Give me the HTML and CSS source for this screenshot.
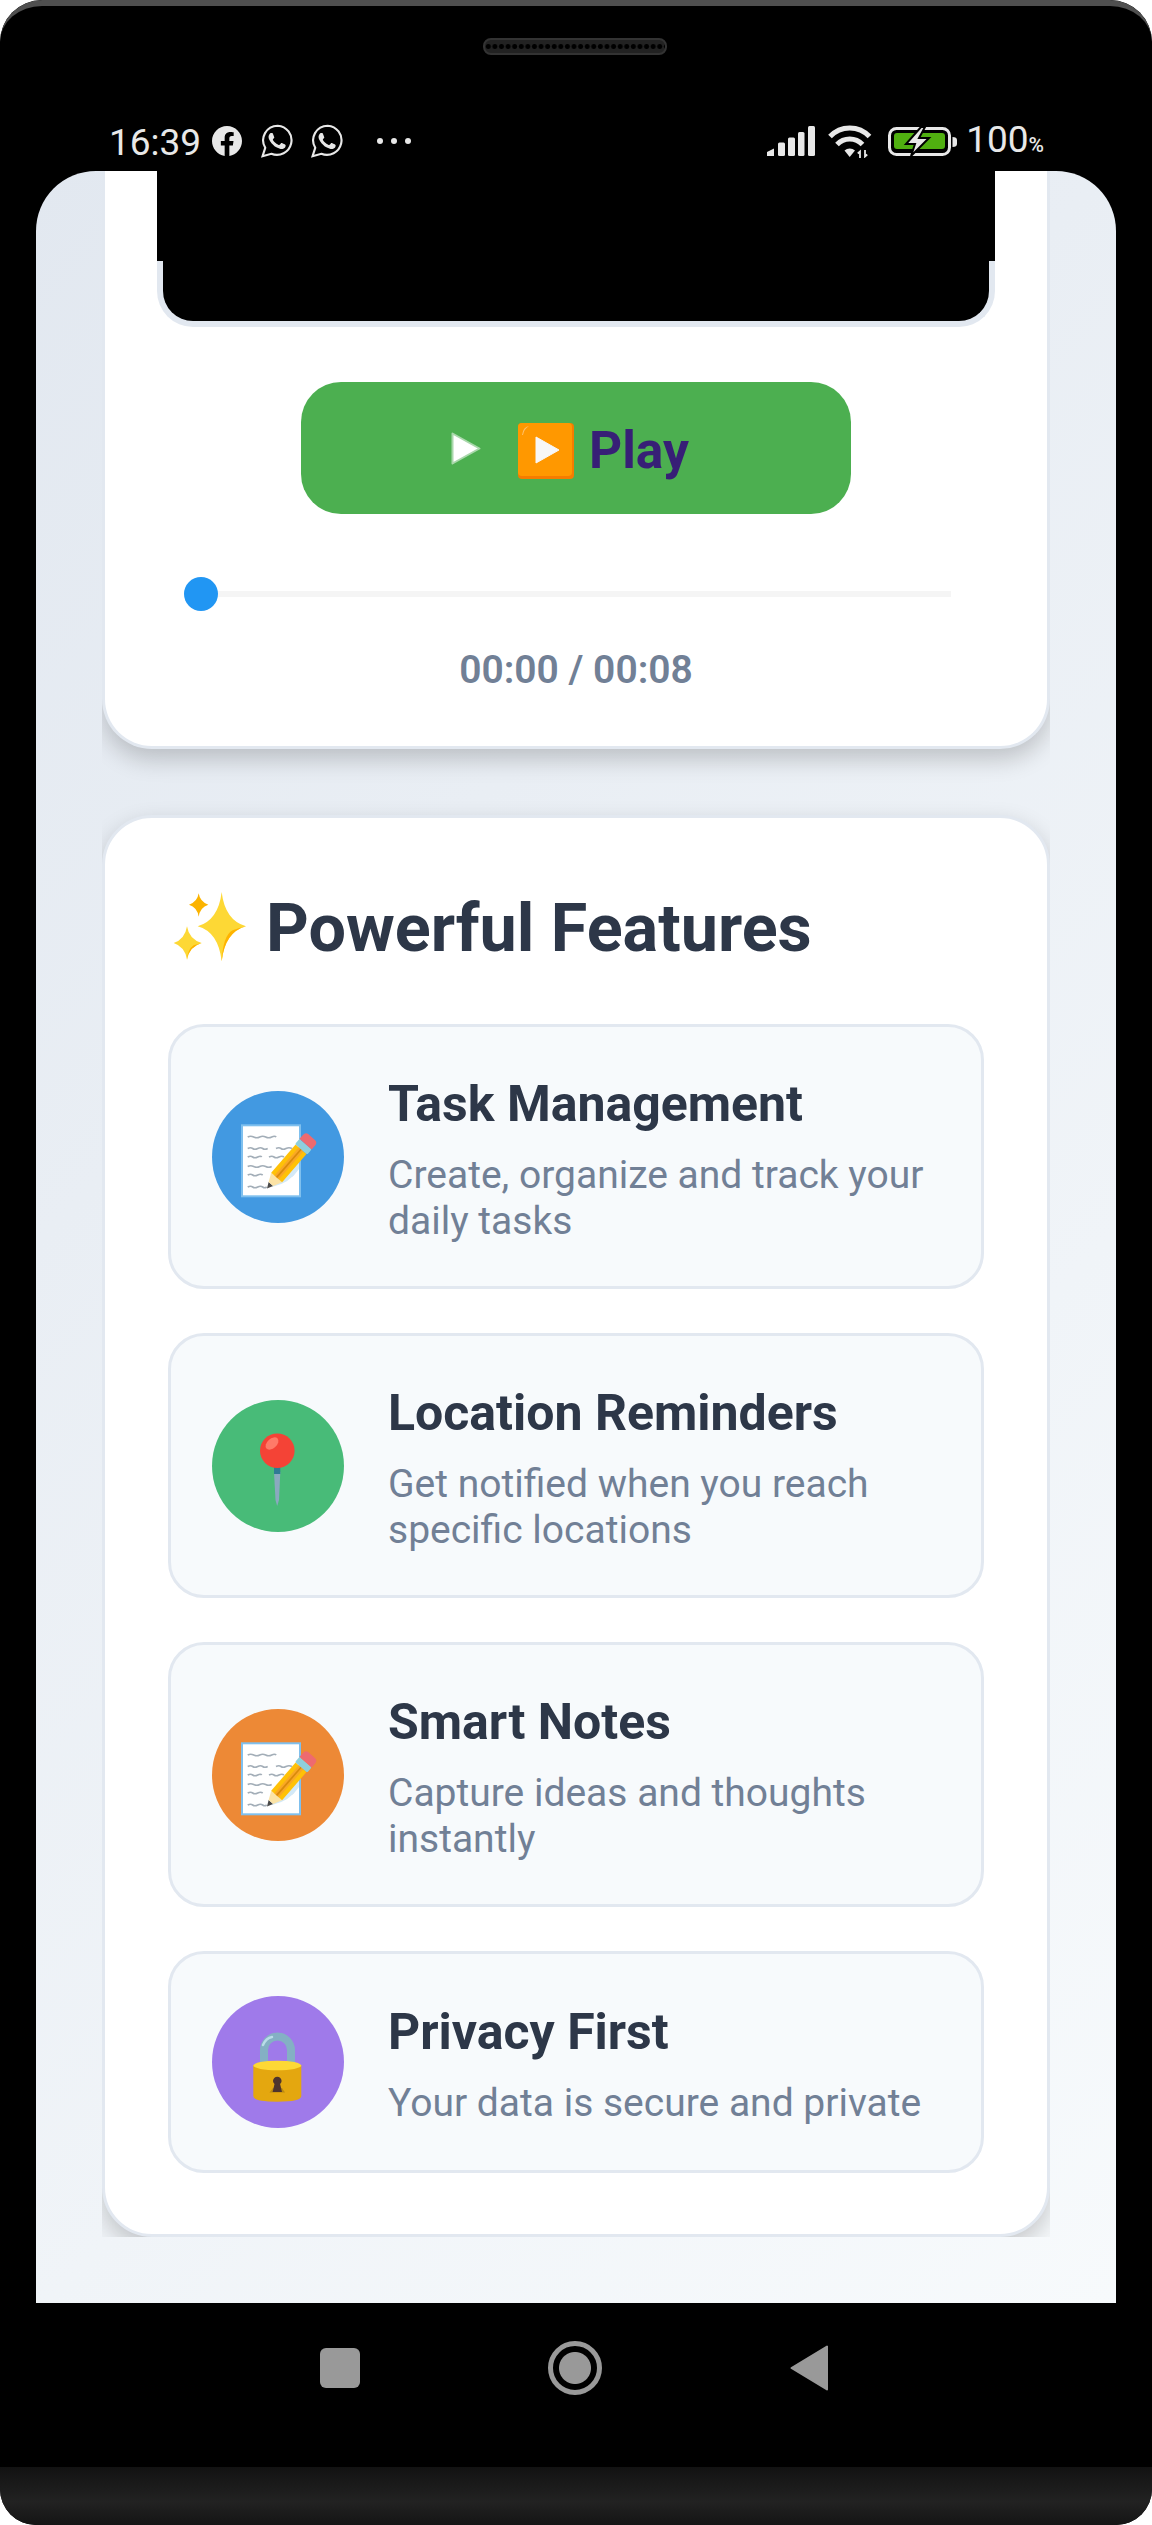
FILE: index.html
```html
<!DOCTYPE html>
<html lang="en">
<head>
  <meta charset="UTF-8" />
  <title>Powerful Features</title>
  <link rel="stylesheet" href="styles.css">
</head>
<body>
  <svg class="defs" width="0" height="0">
    <symbol id="memo" viewBox="0 0 132 132">
      <rect x="30" y="34.3" width="58" height="71" fill="#fff" stroke="#7fc0ee" stroke-width="2"/>
      <g fill="none" stroke="#a3aeb8" stroke-width="1.7">
        <path d="M35.7 46q3-1.500 6 0t6 0 6 0 6 0 4.500 0"/>
        <path d="M35.700 57.500q3-1.500 5 0t5 0 5 0 5 0M64 57.500q3-1.500 5 0t5 0 6 0"/>
        <path d="M35.700 66q3-1.500 5 0t5 0 4 0M57 66q3-1.500 5 0t5 0 5 0"/>
        <path d="M35.700 75.500q3-1.500 6 0t6 0 6 0 6 0"/>
        <path d="M35.700 84q3-1.500 5 0t5 0 5 0M73 84q3-1.500 4 0t4 0"/>
        <path d="M35.700 96q3-1.500 5 0t5 0 5 0 4 0"/>
      </g>
      <path d="M60 96Q78 92 87 78L87 70 64 88Z" fill="#d3e9f7"/>
      <g transform="translate(55 97.500) rotate(-49) scale(.98 .85)">
        <path d="M0 0L6-3.500V3.500Z" fill="#4a4a4a"/>
        <path d="M6-3.500L15-8.500V8.500L6 3.500Z" fill="#fbe3a6"/>
        <rect x="15" y="-8.500" width="38" height="17" fill="#ffc107"/>
        <rect x="15" y="-3.500" width="38" height="7" fill="#f9a825"/>
        <rect x="15" y="-1" width="38" height="2" fill="#d98a0b"/>
        <rect x="53" y="-9.500" width="7" height="19" rx="1.500" fill="#8fcfdc"/>
        <path d="M60-9.500H65Q69.500-9.500 69.500-5V5Q69.500 9.500 65 9.500H60Z" fill="#ee6a6f"/>
      </g>
    </symbol>
  </svg>

  <div class="phone">
    <div class="top-bezel">
      <div class="speaker"></div>
      <div class="status-bar">
        <div class="status-left">
          <span class="clock">16:39</span>
          <svg class="fb-icon" viewBox="0 0 24 24"><path fill="#e8e8e8" d="M24 12.070C24 5.400 18.630 0 12 0S0 5.400 0 12.070c0 6.030 4.390 11.020 10.130 11.930v-8.440H7.080v-3.490h3.050V9.410c0-3.020 1.790-4.690 4.530-4.690 1.310 0 2.680.240 2.680.240v2.970h-1.510c-1.490 0-1.950.930-1.950 1.880v2.260h3.330l-.530 3.490h-2.800V24C19.610 23.090 24 18.100 24 12.070z"/></svg>
          <svg class="wa-icon" viewBox="0 0 24 24"><path fill="none" stroke="#e8e8e8" stroke-width="1.500" d="M12.500 1.200A10.300 10.300 0 0 0 3.700 16.800L1.800 22.800l6.200-1.800A10.300 10.300 0 1 0 12.500 1.200z"/><path fill="#e8e8e8" d="M17.470 14.380c-.3-.15-1.760-.87-2.030-.97-.27-.1-.47-.15-.67.150-.2.3-.77.970-.94 1.170-.17.2-.35.220-.64.070-.3-.15-1.260-.46-2.390-1.480-.88-.79-1.480-1.760-1.650-2.060-.17-.3-.02-.46.130-.6.130-.13.3-.35.450-.52.150-.17.2-.3.3-.5.1-.2.050-.37-.02-.52-.08-.15-.67-1.610-.91-2.200-.24-.58-.49-.5-.67-.51h-.57c-.2 0-.52.070-.79.370-.27.3-1.040 1.020-1.040 2.480s1.070 2.880 1.210 3.070c.15.2 2.100 3.200 5.080 4.490.71.3 1.260.49 1.690.62.71.230 1.360.2 1.870.120.570-.08 1.760-.72 2.010-1.410.25-.7.250-1.290.170-1.410-.07-.13-.27-.2-.57-.35z"/></svg>
          <svg class="wa-icon" viewBox="0 0 24 24"><path fill="none" stroke="#e8e8e8" stroke-width="1.500" d="M12.500 1.200A10.300 10.300 0 0 0 3.700 16.800L1.800 22.800l6.200-1.800A10.300 10.300 0 1 0 12.500 1.200z"/><path fill="#e8e8e8" d="M17.470 14.380c-.3-.15-1.760-.87-2.030-.97-.27-.1-.47-.15-.67.150-.2.3-.77.970-.94 1.170-.17.2-.35.220-.64.070-.3-.15-1.260-.46-2.390-1.480-.88-.79-1.480-1.760-1.650-2.060-.17-.3-.02-.46.130-.6.130-.13.3-.35.450-.52.150-.17.2-.3.3-.5.1-.2.050-.37-.02-.52-.08-.15-.67-1.610-.91-2.200-.24-.58-.49-.5-.67-.51h-.57c-.2 0-.52.070-.79.370-.27.3-1.040 1.020-1.040 2.480s1.070 2.880 1.210 3.070c.15.2 2.100 3.200 5.080 4.490.71.3 1.260.49 1.690.62.71.230 1.360.2 1.870.120.570-.08 1.760-.72 2.010-1.410.25-.7.250-1.290.170-1.410-.07-.13-.27-.2-.57-.35z"/></svg>
          <div class="more-dots"><i></i><i></i><i></i></div>
        </div>
        <div class="status-right">
          <svg class="signal" viewBox="0 0 48 30" fill="#e8e8e8">
            <path d="M0 30V26L7 22.500V30Z"/>
            <rect x="11" y="16.500" width="7" height="13.500" rx="1.500"/>
            <rect x="21" y="11.500" width="7" height="18.500" rx="1.500"/>
            <rect x="31" y="6" width="6.500" height="24" rx="1.500"/>
            <rect x="41" y="0" width="7" height="30" rx="1.500"/>
          </svg>
          <svg class="wifi" viewBox="0 0 45 33" fill="none" stroke="#e8e8e8" stroke-width="5">
            <path d="M3 11.500A27 27 0 0 1 42.500 11.500"/>
            <path d="M10 19.500A17.500 17.500 0 0 1 35.500 19.500"/>
            <path d="M17.500 25.500L22.700 32 28 25.500A8 8 0 0 0 17.500 25.500Z" fill="#e8e8e8" stroke="none"/>
            <path d="M33 33V26.500L30.800 28.500M33 26.500" stroke-width="1.800"/>
            <path d="M38 25V31.500L40.200 29.500" stroke-width="1.800"/>
          </svg>
          <svg class="battery" viewBox="0 0 69 29">
            <rect x="1.500" y="1.500" width="60" height="26" rx="7" fill="none" stroke="#e8e8e8" stroke-width="3"/>
            <rect x="6" y="6" width="51" height="16" rx="3" fill="#50b010"/>
            <path d="M64.500 10Q69 10 69 13V17Q69 20 64.500 20Z" fill="#e8e8e8"/>
            <path d="M33 0L18 17H27L23 29 41 11H31L37 0Z" fill="#e8e8e8" stroke="#000" stroke-width="2"/>
          </svg>
          <span class="percent">100<small>%</small></span>
        </div>
      </div>
    </div>

    <div class="screen">
      <div class="scroll-area">
        <section class="card player-card">
          <div class="video-frame">
            <div class="video-top"></div>
          </div>
          <button class="play-btn">
            <svg class="play-white" viewBox="0 0 30 33"><path d="M1.500 1.500L28.500 16.500 1.500 31.500Z" fill="#fff" stroke="#a9d8ab" stroke-width="2" stroke-linejoin="round"/></svg>
            <svg class="play-emoji" viewBox="0 0 56 56">
              <rect width="56" height="56" rx="4" fill="#f57c00"/>
              <rect width="54" height="53" rx="4" fill="#ff9800"/>
              <path d="M4 12Q5 4 11 3 6 6 5 12Z" fill="#ffc069"/>
              <path d="M18 14L41 27 18 40Z" fill="#f7f7f7" stroke="#f7f7f7" stroke-linejoin="round"/>
            </svg>
            <span>Play</span>
          </button>
          <div class="slider">
            <div class="slider-thumb"></div>
          </div>
          <div class="time">00:00 / 00:08</div>
        </section>

        <section class="card features-card">
          <h2>
            <svg class="sparkles" viewBox="36 40 222 210">
              <path d="M182 40Q192 125 255 143 192 160 182 248 172 160 110 143 172 125 182 40Z" fill="#fdd835"/>
              <path d="M255 143Q192 160 182 248 186 170 215 155 235 148 255 143Z" fill="#ffb300"/>
              <path d="M113 44Q117 70 142 78 117 86 113 114 109 86 84 78 109 70 113 44Z" fill="#fbb300"/>
              <path d="M78 143Q84 182 122 193 84 204 78 243 72 204 38 193 72 182 78 143Z" fill="#fdd835"/>
              <path d="M122 193Q84 204 78 243 80 212 98 200Z" fill="#ffb300"/>
            </svg>
            Powerful Features
          </h2>

          <div class="feature-list">
            <div class="feature">
              <div class="feature-icon blue"><svg viewBox="0 0 132 132"><use href="#memo"/></svg></div>
              <div class="feature-text">
                <h3>Task Management</h3>
                <p>Create, organize and track your daily tasks</p>
              </div>
            </div>

            <div class="feature">
              <div class="feature-icon green">
                <svg viewBox="0 0 132 132">
                  <path d="M62 72H68.300L67 100 65.200 106 63.500 100Z" fill="#8aa9bf"/>
                  <rect x="62" y="67" width="6.300" height="7" fill="#2f7a94"/>
                  <circle cx="65.300" cy="50.700" r="17.300" fill="#f44336"/>
                  <ellipse cx="60" cy="43.500" rx="7.500" ry="4.800" transform="rotate(-42 60 43.500)" fill="#ff7a68"/>
                </svg>
              </div>
              <div class="feature-text">
                <h3>Location Reminders</h3>
                <p>Get notified when you reach specific locations</p>
              </div>
            </div>

            <div class="feature">
              <div class="feature-icon orange"><svg viewBox="0 0 132 132"><use href="#memo"/></svg></div>
              <div class="feature-text">
                <h3>Smart Notes</h3>
                <p>Capture ideas and thoughts instantly</p>
              </div>
            </div>

            <div class="feature">
              <div class="feature-icon purple">
                <svg viewBox="0 0 132 132">
                  <path d="M52 70V54a13.500 13.500 0 0 1 27 0V70" fill="none" stroke="#84b0c4" stroke-width="8"/>
                  <path d="M51 49Q54 42 60 41" fill="none" stroke="#b9dde8" stroke-width="2.500" stroke-linecap="round"/>
                  <path d="M41.300 69H89.300V100Q89.300 105.700 65.300 105.700 41.300 105.700 41.300 100Z" fill="#e4a70f"/>
                  <ellipse cx="65.300" cy="69.500" rx="24" ry="4.800" fill="#fdd835"/>
                  <path d="M57.500 96.500H73L70 92H61Z" fill="#bb8a10"/>
                  <path d="M61 85a4.300 4.300 0 1 1 8.600 0q0 1.500-1.500 3L70 96H60.600L62.500 88q-1.500-1.500-1.500-3Z" fill="#4e342e"/>
                </svg>
              </div>
              <div class="feature-text">
                <h3>Privacy First</h3>
                <p>Your data is secure and private</p>
              </div>
            </div>
          </div>
        </section>
      </div>
    </div>

    <div class="nav-bar">
      <div class="nav-square"></div>
      <div class="nav-circle"></div>
      <svg class="nav-back" viewBox="0 0 38 46"><path d="M37 1.500V44.500L1.500 23Z" fill="#999" stroke="#999" stroke-width="2" stroke-linejoin="round"/></svg>
    </div>
    <div class="chin"></div>
  </div>
</body>
</html>
```

FILE: styles.css
```css
* {
  box-sizing: border-box;
}

body {
  margin: 0;
  background-color: #fff;
  font-family: Roboto, "Liberation Sans", sans-serif;
}

.defs {
  position: absolute;
}

.phone {
  display: flex;
  flex-direction: column;
  height: 2525px;
  background-color: #000;
  border-radius: 42px 42px 36px 36px;
  overflow: hidden;
}

/* top bezel */
.top-bezel {
  height: 171px;
  padding-top: 32px;
  background-color: #000;
  border-top: 6px solid #4f4f4f;
  border-radius: 42px 42px 0 0;
}

.speaker {
  width: 184px;
  height: 17px;
  margin-left: 483px;
  border-radius: 8px;
  border: 2px solid #333;
  background-color: #222;
  background-image: radial-gradient(circle at center, #000 2px, transparent 3px);
  background-size: 6.600px 13px;
}

.status-bar {
  display: flex;
  justify-content: space-between;
  align-items: center;
  height: 36px;
  margin-top: 68px;
  padding: 0 108px 0 109px;
  color: #e8e8e8;
}

.status-left,
.status-right {
  display: flex;
  align-items: center;
}

.clock {
  width: 103px;
  margin-top: 3px;
  font-size: 37px;
  line-height: 36px;
}

.fb-icon {
  width: 30px;
  height: 30px;
  margin-right: 18px;
}

.wa-icon {
  width: 34px;
  height: 34px;
  margin-right: 16px;
}

.more-dots {
  display: flex;
  gap: 8px;
  margin-left: 17px;
}

.more-dots i {
  width: 6px;
  height: 6px;
  border-radius: 50%;
  background-color: #e8e8e8;
}

.signal {
  width: 48px;
  height: 30px;
  margin-right: 12px;
}

.wifi {
  width: 45px;
  height: 33px;
  margin-right: 16px;
}

.battery {
  width: 69px;
  height: 29px;
  margin-right: 9px;
}

.percent {
  margin-top: 3px;
  font-size: 37px;
  line-height: 36px;
}

.percent small {
  font-size: 21px;
  font-weight: 500;
}

/* screen */
.screen {
  flex: 1;
  min-height: 0;
  margin: 0 36px;
  background: linear-gradient(135deg, #e2e8f0, #f7fafc);
  border-radius: 60px 60px 0 0;
  overflow: hidden;
}

.scroll-area {
  height: 2066px;
  margin: 0 66px;
  overflow: hidden;
}

.card {
  background-color: #fff;
  border: 3px solid #e2e8f0;
  border-radius: 50px;
  box-shadow: 0 10px 24px rgba(0, 0, 0, 0.2);
}

.player-card {
  height: 578px;
  margin-bottom: 66px;
  border-top: none;
  border-radius: 0 0 50px 50px;
  text-align: center;
}

.video-frame {
  height: 156px;
  margin: 0 52px;
  background-color: #000;
  border: 6px solid #e2e8f0;
  border-top: none;
  border-radius: 0 0 36px 36px;
}

.video-top {
  height: 90px;
  margin: 0 -6px;
  background-color: #000;
}

.play-btn {
  display: flex;
  align-items: center;
  width: 550px;
  height: 132px;
  margin: 55px auto 0;
  padding: 0 0 0 150px;
  border: none;
  border-radius: 40px;
  background-color: #4caf50;
  color: #371f76;
  font-family: Roboto, "Liberation Sans", sans-serif;
  font-size: 51.500px;
  font-weight: 700;
}

.play-btn span {
  margin-top: 5px;
}

.play-white {
  width: 30px;
  height: 33px;
  margin-right: 37px;
}

.play-emoji {
  width: 56px;
  height: 56px;
  margin-top: 5px;
  margin-right: 15px;
}

.slider {
  position: relative;
  height: 6px;
  margin: 77px 96px 0 79px;
  background-color: #f5f5f5;
}

.slider-thumb {
  position: absolute;
  left: 0;
  top: -14px;
  width: 34px;
  height: 34px;
  border-radius: 50%;
  background-color: #2196f3;
}

.time {
  margin-top: 50px;
  color: #718096;
  font-size: 39px;
  font-weight: 600;
}

.features-card {
  height: 1422px;
  padding: 71px 63px 0;
}

.features-card h2 {
  display: flex;
  align-items: center;
  gap: 19px;
  margin: 0 0 57px;
  padding-left: 5px;
  color: #2d3748;
  font-size: 66.500px;
  font-weight: 700;
}

.sparkles {
  width: 74px;
  height: 70px;
  margin-top: -3px;
}

.feature-list {
  display: flex;
  flex-direction: column;
  gap: 44px;
}

.feature {
  display: flex;
  align-items: center;
  gap: 44px;
  padding: 42px 38px 42px 41px;
  background-color: #f7fafc;
  border: 3px solid #e2e8f0;
  border-radius: 36px;
}

.feature-icon {
  flex: none;
  width: 132px;
  height: 132px;
  border-radius: 50%;
}

.feature-icon svg {
  display: block;
  width: 132px;
  height: 132px;
}

.blue {
  background-color: #4299e1;
}

.green {
  background-color: #48bb78;
}

.orange {
  background-color: #ed8936;
}

.purple {
  background-color: #9f7aea;
}

.feature-text h3 {
  margin: 0 0 14px;
  color: #2d3748;
  font-size: 50px;
  line-height: 70px;
  font-weight: 700;
}

.feature-text p {
  margin: 0;
  color: #718096;
  font-size: 39px;
  line-height: 45.500px;
}

/* nav bar */
.nav-bar {
  display: flex;
  justify-content: center;
  align-items: center;
  gap: 188px;
  height: 164px;
  padding: 0 5px 34px 0;
  background-color: #000;
}

.nav-square {
  width: 40px;
  height: 40px;
  border-radius: 6px;
  background-color: #999;
}

.nav-circle {
  width: 54px;
  height: 54px;
  border-radius: 50%;
  border: 5px solid #999;
  background: radial-gradient(circle, #999 15.500px, #000 16.500px);
}

.nav-back {
  width: 38px;
  height: 46px;
}

.chin {
  height: 58px;
  background: linear-gradient(#121212, #222 60%, #141414);
}
```
